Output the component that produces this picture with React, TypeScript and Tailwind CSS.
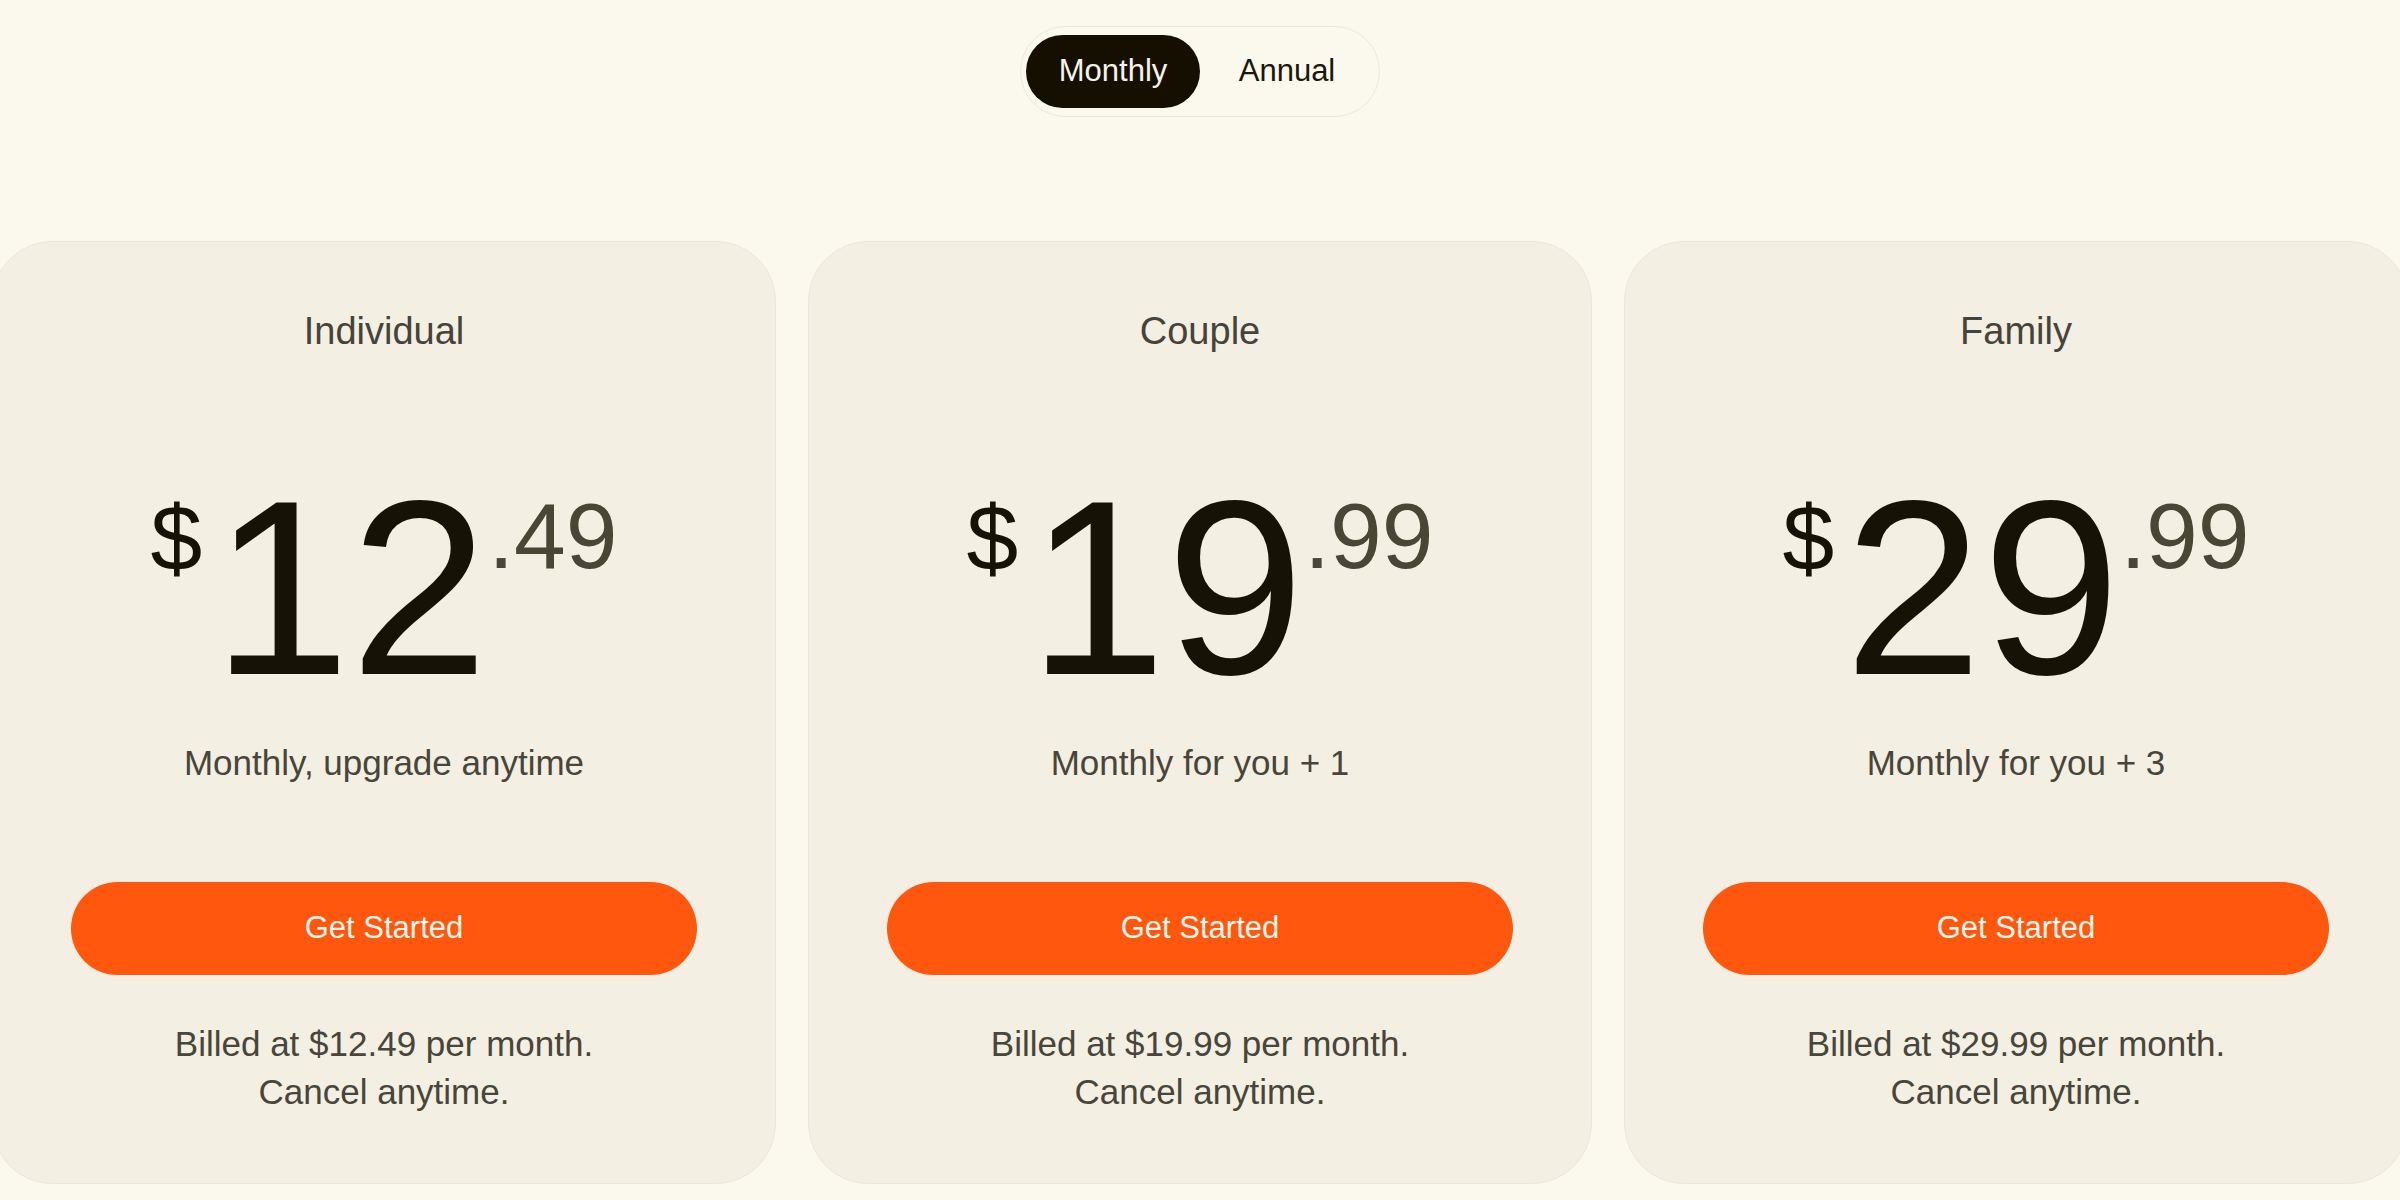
const plans = [
  { name: 'Individual', whole: '12', cents: '.49', blurb: 'Monthly, upgrade anytime', billed: '$12.49' },
  { name: 'Couple', whole: '19', cents: '.99', blurb: 'Monthly for you + 1', billed: '$19.99' },
  { name: 'Family', whole: '29', cents: '.99', blurb: 'Monthly for you + 3', billed: '$29.99' },
]

function PlanCard({ plan }: { plan: (typeof plans)[number] }) {
  return (
    <div className="w-[784px] shrink-0 flex flex-col items-center rounded-[60px] border border-[#ebe7da] bg-[#f3efe3] px-[78px] pt-[70px] pb-[67px]">
      <h2 className="text-[38px] leading-none text-[#45433a]">{plan.name}</h2>

      <div className="mt-[114px] flex items-start">
        <span className="mt-[28px] mr-[10px] text-[93px] leading-none text-[#161205]">$</span>
        <span className="text-[248px] leading-none text-[#161205]">{plan.whole}</span>
        <span className="mt-[26px] text-[93px] leading-none text-[#4a4636]">{plan.cents}</span>
      </div>

      <p className="mt-[33px] text-[35px] leading-none text-[#48453a]">{plan.blurb}</p>

      <button className="mt-[102px] h-[93px] w-full rounded-full bg-[#ff570d] text-[31px] text-[#fff8f0]">
        Get Started
      </button>

      <p className="mt-[45px] text-center text-[35px] leading-[48px] text-[#48453a]">
        Billed at {plan.billed} per month.
        <br />
        Cancel anytime.
      </p>
    </div>
  )
}

export default function App() {
  return (
    <div className="min-h-screen w-full overflow-hidden bg-[#fbf9ed] font-['Liberation_Sans',Arial,sans-serif]">
      <div className="flex justify-center pt-[26px]">
        <div className="flex items-center rounded-full border border-[#ebe8dc] px-[5px] py-[8px]">
          <button className="h-[73px] w-[174px] rounded-full bg-[#150f02] text-[31px] text-[#f7f3e8]">
            Monthly
          </button>
          <button className="h-[73px] w-[174px] rounded-full text-[31px] text-[#1b1809]">
            Annual
          </button>
        </div>
      </div>

      <div className="mt-[124px] flex justify-center gap-8">
        {plans.map((plan) => (
          <PlanCard key={plan.name} plan={plan} />
        ))}
      </div>
    </div>
  )
}
